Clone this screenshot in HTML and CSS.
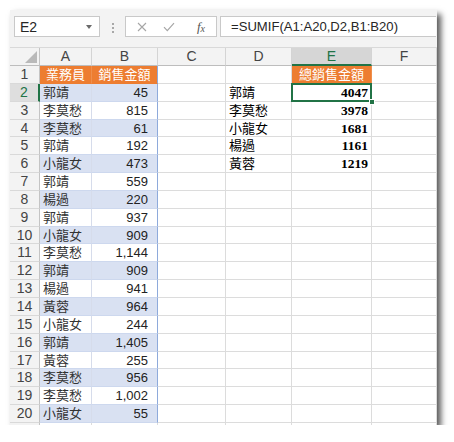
FILE: index.html
```html
<!DOCTYPE html>
<html>
<head>
<meta charset="utf-8">
<link rel="stylesheet" href="styles.css">
</head>
<body>
<div class="window">
  <div class="toolbar">
    <div class="namebox"><span>E2</span><span class="dd"></span></div>
    <div class="sep"><span class="dots"><i></i><i></i><i></i></span></div>
    <div class="fxbox">
      <span class="ico ico-x"><svg width="10" height="10" viewBox="0 0 10 10"><path d="M1 1L9 9M9 1L1 9" stroke="#a6a6a6" stroke-width="1.1" fill="none"/></svg></span>
      <span class="ico ico-v"><svg width="12" height="10" viewBox="0 0 12 10"><path d="M1 5.2L4.3 8.6L11 1.2" stroke="#a6a6a6" stroke-width="1.2" fill="none"/></svg></span>
      <span class="ico ico-fx"><i>f</i><i class="sub">x</i></span>
    </div>
    <div class="formula">=SUMIF(A1:A20,D2,B1:B20)</div>
  </div>
  <div class="sheet">
    <div class="c corner"><svg width="12" height="12" viewBox="0 0 12 12"><polygon points="12,0 12,12 0,12" fill="#b9b9b9"/></svg></div>
    <div class="c ch">A</div><div class="c ch">B</div><div class="c ch">C</div><div class="c ch">D</div><div class="c ch sel">E</div><div class="c ch">F</div>

    <div class="c rh">1</div><div class="c hd">業務員</div><div class="c hd hdb">銷售金額</div><div class="c"></div><div class="c"></div><div class="c hd">總銷售金額</div><div class="c"></div>

    <div class="c rh sel">2</div><div class="c ta band">郭靖</div><div class="c tb band">45</div><div class="c"></div><div class="c dn">郭靖</div><div class="c en cur">4047<span class="selbox"></span><span class="handle"></span></div><div class="c"></div>
    <div class="c rh">3</div><div class="c ta">李莫愁</div><div class="c tb">815</div><div class="c"></div><div class="c dn">李莫愁</div><div class="c en">3978</div><div class="c"></div>
    <div class="c rh">4</div><div class="c ta band">李莫愁</div><div class="c tb band">61</div><div class="c"></div><div class="c dn">小龍女</div><div class="c en">1681</div><div class="c"></div>
    <div class="c rh">5</div><div class="c ta">郭靖</div><div class="c tb">192</div><div class="c"></div><div class="c dn">楊過</div><div class="c en">1161</div><div class="c"></div>
    <div class="c rh">6</div><div class="c ta band">小龍女</div><div class="c tb band">473</div><div class="c"></div><div class="c dn">黃蓉</div><div class="c en">1219</div><div class="c"></div>
    <div class="c rh">7</div><div class="c ta">郭靖</div><div class="c tb">559</div><div class="c"></div><div class="c"></div><div class="c"></div><div class="c"></div>
    <div class="c rh">8</div><div class="c ta band">楊過</div><div class="c tb band">220</div><div class="c"></div><div class="c"></div><div class="c"></div><div class="c"></div>
    <div class="c rh">9</div><div class="c ta">郭靖</div><div class="c tb">937</div><div class="c"></div><div class="c"></div><div class="c"></div><div class="c"></div>
    <div class="c rh">10</div><div class="c ta band">小龍女</div><div class="c tb band">909</div><div class="c"></div><div class="c"></div><div class="c"></div><div class="c"></div>
    <div class="c rh">11</div><div class="c ta">李莫愁</div><div class="c tb">1,144</div><div class="c"></div><div class="c"></div><div class="c"></div><div class="c"></div>
    <div class="c rh">12</div><div class="c ta band">郭靖</div><div class="c tb band">909</div><div class="c"></div><div class="c"></div><div class="c"></div><div class="c"></div>
    <div class="c rh">13</div><div class="c ta">楊過</div><div class="c tb">941</div><div class="c"></div><div class="c"></div><div class="c"></div><div class="c"></div>
    <div class="c rh">14</div><div class="c ta band">黃蓉</div><div class="c tb band">964</div><div class="c"></div><div class="c"></div><div class="c"></div><div class="c"></div>
    <div class="c rh">15</div><div class="c ta">小龍女</div><div class="c tb">244</div><div class="c"></div><div class="c"></div><div class="c"></div><div class="c"></div>
    <div class="c rh">16</div><div class="c ta band">郭靖</div><div class="c tb band">1,405</div><div class="c"></div><div class="c"></div><div class="c"></div><div class="c"></div>
    <div class="c rh">17</div><div class="c ta">黃蓉</div><div class="c tb">255</div><div class="c"></div><div class="c"></div><div class="c"></div><div class="c"></div>
    <div class="c rh">18</div><div class="c ta band">李莫愁</div><div class="c tb band">956</div><div class="c"></div><div class="c"></div><div class="c"></div><div class="c"></div>
    <div class="c rh">19</div><div class="c ta">李莫愁</div><div class="c tb">1,002</div><div class="c"></div><div class="c"></div><div class="c"></div><div class="c"></div>
    <div class="c rh">20</div><div class="c ta band">小龍女</div><div class="c tb band">55</div><div class="c"></div><div class="c"></div><div class="c"></div><div class="c"></div>
    <div class="c rh"></div><div class="c"></div><div class="c"></div><div class="c"></div><div class="c"></div><div class="c"></div><div class="c"></div>
  </div>
</div>
</body>
</html>
```
FILE: styles.css
```css
body {
  margin: 0;
  background: #fff;
}
.window {
  margin: 10px 0 0 10px;
  width: 427px;
  height: 415px;
  overflow: hidden;
  background: #fff;
  box-shadow: 4px 4px 6px rgba(0, 0, 0, 0.65);
}
.toolbar {
  height: 38px;
  box-sizing: border-box;
  background: #f3f3f3;
  border-bottom: 1px solid #d9d9d9;
  display: flex;
  align-items: flex-start;
  padding: 6px 0 0 4px;
}
.namebox {
  width: 86px;
  height: 21px;
  box-sizing: border-box;
  background: #fff;
  border: 1px solid #c9c9c9;
  display: flex;
  align-items: center;
  padding-left: 5px;
  font: 14px "Liberation Sans", sans-serif;
  color: #262626;
}
.dd {
  margin-left: auto;
  margin-right: 7px;
  width: 0;
  height: 0;
  border-left: 3.5px solid transparent;
  border-right: 3.5px solid transparent;
  border-top: 4px solid #6a6a6a;
}
.sep {
  width: 25px;
  display: flex;
  justify-content: center;
  padding-top: 7px;
}
.dots {
  display: flex;
  flex-direction: column;
  gap: 2px;
}
.dots i {
  display: block;
  width: 2px;
  height: 2px;
  background: #a8a8a8;
}
.fxbox {
  width: 92px;
  height: 21px;
  box-sizing: border-box;
  background: #fff;
  border: 1px solid #c9c9c9;
  display: flex;
  align-items: center;
  padding-left: 10px;
}
.ico {
  display: flex;
  align-items: center;
  justify-content: center;
}
.ico-x { width: 12px; }
.ico-v { width: 14px; margin-left: 14px; }
.ico-fx {
  width: 16px;
  margin-left: 17px;
  font: italic 13px "Liberation Serif", serif;
  color: #555;
}
.ico-fx .sub {
  font-size: 10px;
  margin-top: 3px;
}
.formula {
  width: 216px;
  height: 21px;
  box-sizing: border-box;
  margin-left: 3px;
  background: #fff;
  border: 1px solid #c9c9c9;
  border-right: none;
  padding-left: 10px;
  font: 13.1px "Liberation Sans", sans-serif;
  line-height: 19px;
  color: #262626;
  white-space: nowrap;
}
.sheet {
  display: grid;
  grid-template-columns: 30px 52px 66px 68px 66px 80px 65px;
  grid-template-rows: 18px;
  grid-auto-rows: 17.85px;
}
.c {
  box-sizing: border-box;
  border-right: 1px solid #dcdcdc;
  border-bottom: 1px solid #dcdcdc;
  font: 13px "Liberation Sans", sans-serif;
  line-height: 17px;
  white-space: nowrap;
  color: #222;
  padding: 0 3px;
}
.corner {
  background: #f3f3f3;
  border-right-color: #c4c4c4;
  border-bottom-color: #bdbdbd;
  display: flex;
  align-items: flex-end;
  justify-content: flex-end;
  padding: 0 2px 2px 0;
}
.ch {
  background: #f3f3f3;
  text-align: center;
  color: #444;
  font-size: 14px;
  border-right-color: #d4d4d4;
  border-bottom-color: #bdbdbd;
}
.ch.sel {
  background: #d6d6d6;
  color: #217346;
  border-bottom: 2px solid #217346;
}
.rh {
  background: #f3f3f3;
  text-align: center;
  color: #444;
  font-size: 14px;
  border-right-color: #c4c4c4;
  border-bottom-color: #d9d9d9;
  padding: 0;
}
.rh.sel {
  background: #dedede;
  color: #217346;
  border-right: 2px solid #217346;
}
.hd {
  background: #ed7d31;
  color: #fff;
  text-align: center;
  font-family: "Noto Sans CJK TC", "Noto Sans CJK SC", sans-serif;
  font-size: 13px;
  line-height: 16px;
  border-right-color: #ef8f4c;
  border-bottom-color: #ed7d31;
  padding: 0;
}
.hd.hdb {
  border-right-color: #8eaadb;
}
.ta {
  font-family: "Noto Sans CJK TC", "Noto Sans CJK SC", sans-serif;
  color: #333;
  padding-left: 3px;
  border-right-color: #d6dceb;
  border-bottom-color: #cdd8ee;
  line-height: 16px;
}
.tb {
  text-align: right;
  padding-right: 9px;
  border-right-color: #8eaadb;
  border-bottom-color: #cdd8ee;
}
.band {
  background: #d9e1f2;
}
.dn {
  font-family: "Noto Sans CJK TC", "Noto Sans CJK SC", sans-serif;
  font-size: 13px;
  color: #000;
  line-height: 16px;
}
.en {
  font: bold 13.5px "Liberation Serif", serif;
  line-height: 17px;
  color: #000;
  text-align: right;
  padding-right: 3px;
}
.cur {
  position: relative;
}
.selbox {
  position: absolute;
  left: -1px;
  top: -1px;
  width: 81px;
  height: 19px;
  box-sizing: border-box;
  border: 2px solid #217346;
}
.handle {
  position: absolute;
  right: -4px;
  bottom: -4px;
  width: 6px;
  height: 6px;
  box-sizing: border-box;
  background: #217346;
  border: 1px solid #fff;
}
```
